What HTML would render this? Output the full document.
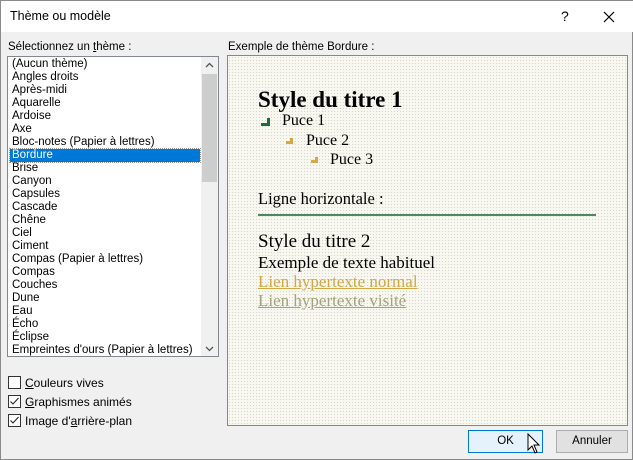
<!DOCTYPE html>
<html><head><meta charset="utf-8"><style>
*{margin:0;padding:0;box-sizing:border-box}
body{width:633px;height:460px;background:#f0f0f0;font-family:"Liberation Sans",sans-serif;font-size:11.5px;color:#000;position:relative;overflow:hidden;border:1px solid #8a8a8a}
.title{position:absolute;left:0;top:0;width:633px;height:31px;background:#fff}
.abs{position:absolute;white-space:nowrap}
.list{position:absolute;left:6px;top:55px;width:212px;height:301px;background:#fff;border:1px solid #828790;overflow:hidden}
.sb{position:absolute;right:0;top:0;width:17px;height:300px;background:#f0f0f0}
.thumb{position:absolute;left:1px;top:17px;width:15px;height:108px;background:#cdcdcd}
.item{position:absolute;left:2px;width:190px;height:13px;line-height:13px;padding-left:2px;font-size:11.5px}
.sel{background:#0078d7;color:#fff;outline:1px dotted #999}
.prev{position:absolute;left:226px;top:54px;width:401px;height:371px;border:1px solid #828790;background-color:#f8f8f0;background-image:radial-gradient(circle,#d6d6cf 0.6px,transparent 0.8px);background-size:3px 3px}
.serif{font-family:"Liberation Serif",serif}
.cb{position:absolute;left:7px;width:13px;height:13px;border:1px solid #333;background:#fff}
.btn{position:absolute;top:429px;height:23px;background:#e1e1e1;border:1px solid #adadad;text-align:center;line-height:21px;font-size:11.5px}
</style></head><body>
<div class="title"></div>
<div class="abs" style="left:9px;top:8px;font-size:12.5px">Thème ou modèle</div>
<div class="abs" style="left:560px;top:7px;font-size:14px">?</div>
<svg class="abs" style="left:602px;top:10px" width="12" height="12"><path d="M1 1L11 11M11 1L1 11" stroke="#000" stroke-width="1.2"/></svg>
<div class="abs" style="left:7px;top:40px">Sélectionnez un <u>t</u>hème :</div>
<div class="abs" style="left:227px;top:40px">Exemple de thème Bordure :</div>
<div class="list">
<div class="item" style="top:1px">(Aucun thème)</div>
<div class="item" style="top:14px">Angles droits</div>
<div class="item" style="top:27px">Après-midi</div>
<div class="item" style="top:40px">Aquarelle</div>
<div class="item" style="top:53px">Ardoise</div>
<div class="item" style="top:66px">Axe</div>
<div class="item" style="top:79px">Bloc-notes (Papier à lettres)</div>
<div class="item sel" style="top:92px">Bordure</div>
<div class="item" style="top:105px">Brise</div>
<div class="item" style="top:118px">Canyon</div>
<div class="item" style="top:131px">Capsules</div>
<div class="item" style="top:144px">Cascade</div>
<div class="item" style="top:157px">Chêne</div>
<div class="item" style="top:170px">Ciel</div>
<div class="item" style="top:183px">Ciment</div>
<div class="item" style="top:196px">Compas (Papier à lettres)</div>
<div class="item" style="top:209px">Compas</div>
<div class="item" style="top:222px">Couches</div>
<div class="item" style="top:235px">Dune</div>
<div class="item" style="top:248px">Eau</div>
<div class="item" style="top:261px">Écho</div>
<div class="item" style="top:274px">Éclipse</div>
<div class="item" style="top:287px">Empreintes d'ours (Papier à lettres)</div>
<div class="sb"><div class="thumb"></div>
<svg class="abs" style="left:4px;top:5px" width="9" height="6"><path d="M1 5L4.5 1.5L8 5" stroke="#555" fill="none" stroke-width="1.3"/></svg>
<svg class="abs" style="left:4px;top:289px" width="9" height="6"><path d="M1 1L4.5 4.5L8 1" stroke="#555" fill="none" stroke-width="1.3"/></svg>
</div>
</div>
<div class="prev">
<div class="abs serif" style="left:30px;top:31px;font-size:23px;font-weight:bold">Style du titre 1</div>
<svg class="abs" style="left:33px;top:62px" width="9" height="8"><path d="M6 0H9V8H0V5H6Z" fill="#1e6b3c"/></svg>
<div class="abs serif" style="left:54px;top:56px;font-size:16px">Puce 1</div>
<svg class="abs" style="left:58px;top:82px" width="7" height="6"><path d="M4 0H7V6H0V3H4Z" fill="#d8a840"/></svg>
<div class="abs serif" style="left:78px;top:76px;font-size:16px">Puce 2</div>
<svg class="abs" style="left:83px;top:101px" width="7" height="6"><path d="M4 0H7V6H0V3H4Z" fill="#d8a840"/></svg>
<div class="abs serif" style="left:102px;top:95px;font-size:16px">Puce 3</div>
<div class="abs serif" style="left:30px;top:133px;font-size:16.5px">Ligne horizontale :</div>
<div class="abs" style="left:30px;top:158px;width:338px;height:2px;background:#4a8a62"></div>
<div class="abs serif" style="left:30px;top:175px;font-size:19px">Style du titre 2</div>
<div class="abs serif" style="left:30px;top:197px;font-size:17px">Exemple de texte habituel</div>
<div class="abs serif" style="left:30px;top:216px;font-size:17px;color:#d1a844;text-decoration:underline">Lien hypertexte normal</div>
<div class="abs serif" style="left:30px;top:235px;font-size:17px;color:#a3a37a;text-decoration:underline">Lien hypertexte visité</div>
</div>
<div class="cb" style="top:375px"></div>
<div class="abs" style="left:24px;top:375px;font-size:12px"><u>C</u>ouleurs vives</div>
<div class="cb" style="top:394px"></div>
<svg class="abs" style="left:8px;top:395px" width="11" height="11"><path d="M1.5 5.5L4 8L9.5 2" stroke="#222" fill="none" stroke-width="1.1"/></svg>
<div class="abs" style="left:24px;top:394px;font-size:12px"><u>G</u>raphismes animés</div>
<div class="cb" style="top:413px"></div>
<svg class="abs" style="left:8px;top:414px" width="11" height="11"><path d="M1.5 5.5L4 8L9.5 2" stroke="#222" fill="none" stroke-width="1.1"/></svg>
<div class="abs" style="left:24px;top:413px;font-size:12px">Image d'<u>a</u>rrière-plan</div>
<div class="btn" style="left:467px;width:75px;border:1px solid #0078d7;background:#e5f1fb">OK</div>
<svg class="abs" style="left:526px;top:432px" width="14" height="22"><path d="M1 1V17L5 13L8 20L10 19L7 12H12Z" fill="#fff" stroke="#000" stroke-width="1"/></svg>
<div class="btn" style="left:555px;width:72px">Annuler</div>
</body></html>
